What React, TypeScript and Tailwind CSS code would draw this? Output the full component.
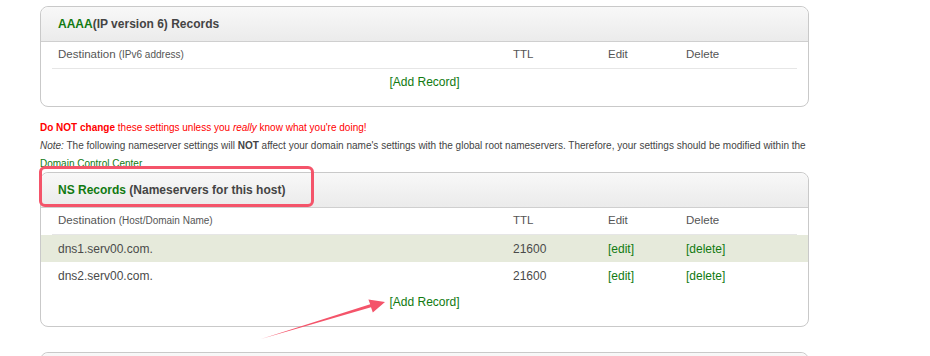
import React from "react";

const green = "text-[#117a11]";

type Row = { dest: string; ttl: string };

const nsRows: Row[] = [
  { dest: "dns1.serv00.com.", ttl: "21600" },
  { dest: "dns2.serv00.com.", ttl: "21600" },
];

const cols = "grid grid-cols-[455px_95px_78px_118px]";

function ColumnHeader({ sub }: { sub: string }) {
  return (
    <div className={`${cols} mx-[11px] h-[27px] items-center border-b border-[#e6e6e6] text-[11.5px] text-[#555]`}>
      <div className="pl-[6px]">
        Destination <span className="text-[10px]">({sub})</span>
      </div>
      <div className="pl-[6px]">TTL</div>
      <div className="pl-[6px]">Edit</div>
      <div className="pl-[6px]">Delete</div>
    </div>
  );
}

function AddRecord() {
  return (
    <div className="pb-[12px]">
      <div className={`flex h-[25px] items-center justify-center text-[12px] ${green}`}>[Add Record]</div>
    </div>
  );
}

function BoxHeader({ children }: { children?: React.ReactNode }) {
  return (
    <div className="flex h-[35px] items-center rounded-t-[8px] border-b border-[#cfcfcf] bg-gradient-to-b from-[#f8f8f8] to-[#ebebeb] pl-[17px] text-[12px] font-bold text-[#444]">
      {children}
    </div>
  );
}

export default function App() {
  return (
    <div className="relative h-[356px] w-[930px] overflow-hidden bg-white font-['Liberation_Sans',Arial,sans-serif]">
      <div className="ml-[40px] w-[769px] pt-[6px]">
        {/* AAAA */}
        <div className="rounded-[8px] border border-[#c9c9c9]">
          <BoxHeader>
            <span className={green}>AAAA</span>(IP version 6) Records
          </BoxHeader>
          <ColumnHeader sub="IPv6 address" />
          <AddRecord />
        </div>

        <div className="mt-[12px] h-[54px] text-[10px] leading-[18px] text-[#444]">
          <div className="text-[#ff0000]">
            <b>Do NOT change</b> these settings unless you <i>really</i> know what you're doing!
          </div>
          <div>
            <i>Note:</i> The following nameserver settings will <b>NOT</b> affect your domain name's settings with the
            global root nameservers. Therefore, your settings should be modified within the{" "}
            <span className={green}>Domain Control Center</span>
          </div>
        </div>

        {/* NS */}
        <div className="relative -mt-px rounded-[8px] border border-[#c9c9c9] bg-white">
          <BoxHeader>
            <span className={green}>NS Records</span>&nbsp;(Nameservers for this host)
          </BoxHeader>
          <ColumnHeader sub="Host/Domain Name" />
          {nsRows.map((r, i) => (
            <div key={r.dest} className={`h-[27px] px-[11px] ${i === 0 ? "bg-[#e6eadb]" : ""}`}>
              <div className={`${cols} h-full items-center text-[12px] text-[#4a4a4a]`}>
                <div className="pl-[6px]">{r.dest}</div>
                <div className="pl-[6px]">{r.ttl}</div>
                <div className={`pl-[6px] ${green}`}>[edit]</div>
                <div className={`pl-[6px] ${green}`}>[delete]</div>
              </div>
            </div>
          ))}
          <AddRecord />
          <div className="absolute left-[-2px] top-[-7px] h-[41px] w-[275px] rounded-[6px] border-[3px] border-[#f4546a]" />
        </div>

        {/* next box */}
        <div className="mt-[25px] rounded-[8px] border border-[#c9c9c9]">
          <BoxHeader />
          <div className="h-[40px]" />
        </div>
      </div>

      <svg className="pointer-events-none absolute left-0 top-0" width="930" height="356" viewBox="0 0 930 356">
        <polygon
          points="261,339 371,307.2 372.8,312.6 385,302 368.4,299.6 370.2,304.2"
          fill="#f4546a"
        />
      </svg>
    </div>
  );
}
